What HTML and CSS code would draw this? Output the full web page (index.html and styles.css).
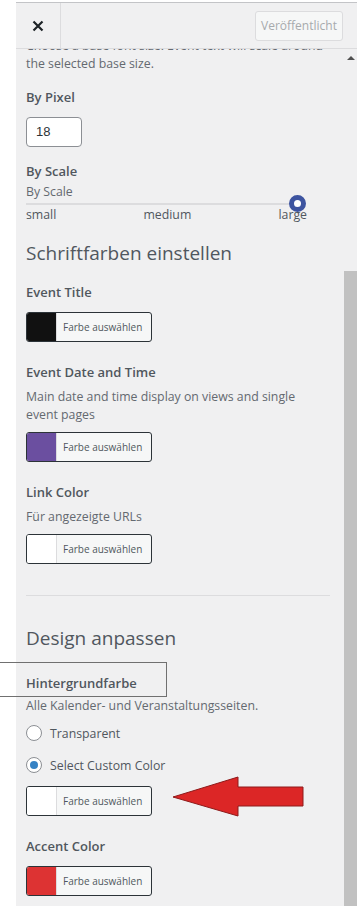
FILE: index.html
```html
<!DOCTYPE html>
<html lang="de">
<head>
<meta charset="utf-8">
<title>Customizer</title>
<link rel="stylesheet" href="styles.css">
</head>
<body>
<div class="frame">
  <div class="sidebar">
    <header class="topbar">
      <button class="close" aria-label="Schließen">
        <svg width="12" height="12" viewBox="0 0 12 12"><path d="M1.5 1.5 L10.5 10.5 M10.5 1.5 L1.5 10.5" stroke="#1d2327" stroke-width="2.2" stroke-linecap="butt"/></svg>
      </button>
      <div class="topbar-rest">
        <button class="publish" disabled>Veröffentlicht</button>
      </div>
    </header>
    <div class="body">
      <div class="content">
        <p class="desc cut"><span class="nowrap">Choose a base font size. Event text will scale around</span><br>the selected base size.</p>

        <div class="label mt-pixel">By Pixel</div>
        <div class="num-input">18</div>

        <div class="label mt-scale">By Scale</div>
        <div class="sub">By Scale</div>
        <div class="slider"><span class="track"></span><span class="thumb"></span></div>
        <div class="slider-labels"><span>small</span><span>medium</span><span>large</span></div>

        <h3 class="section-title mt-h1">Schriftfarben einstellen</h3>

        <div class="label mt-first">Event Title</div>
        <div class="color-btn"><span class="swatch sw-black"></span><span class="cb-text">Farbe auswählen</span></div>

        <div class="label mt-next">Event Date and Time</div>
        <p class="desc">Main date and time display on views and single event pages</p>
        <div class="color-btn"><span class="swatch sw-purple"></span><span class="cb-text">Farbe auswählen</span></div>

        <div class="label mt-next">Link Color</div>
        <p class="desc">Für angezeigte URLs</p>
        <div class="color-btn"><span class="swatch sw-white"></span><span class="cb-text">Farbe auswählen</span></div>

        <hr class="divider">

        <h3 class="section-title mt-h2">Design anpassen</h3>

        <div class="label mt-bg">Hintergrundfarbe</div>
        <p class="desc tight">Alle Kalender- und Veranstaltungsseiten.</p>
        <div class="radio-row first"><span class="radio"></span><span>Transparent</span></div>
        <div class="radio-row"><span class="radio checked"></span><span>Select Custom Color</span></div>
        <div class="color-btn mt-cb"><span class="swatch sw-white"></span><span class="cb-text">Farbe auswählen</span></div>

        <div class="label mt-next">Accent Color</div>
        <div class="color-btn"><span class="swatch sw-red"></span><span class="cb-text">Farbe auswählen</span></div>
      </div>
      <div class="scrollbar">
        <span class="arrow-up"></span>
        <span class="sb-thumb"></span>
      </div>
    </div>
  </div>
</div>
<div class="highlight"></div>
<svg class="annot-arrow" width="134" height="42" viewBox="0 0 134 42">
  <polygon points="1,21 66,1 66,11 131,11 131,30 66,30 66,40" fill="#dc2626" stroke="#8e1a1a" stroke-width="1"/>
</svg>
</body>
</html>
```
FILE: styles.css
```css
* { box-sizing: border-box; }
html, body { margin: 0; padding: 0; background: #ffffff; }
body {
  font-family: "Open Sans", "Noto Sans", "Liberation Sans", sans-serif;
  font-size: 12.3px;
  color: #50575e;
  width: 360px;
  height: 911px;
  overflow: hidden;
  position: relative;
}
.frame {
  padding: 2px 3px 0 16px;
  height: 906px;
}
.sidebar {
  height: 904px;
  display: flex;
  flex-direction: column;
  background: #f0f0f1;
  border-top: 1px solid #c3c4c7;
}
.topbar {
  height: 46px;
  display: flex;
  border-bottom: 1px solid #dcdcde;
  background: #f0f0f1;
  position: relative;
  z-index: 2;
}
.close {
  width: 45px;
  border: 0;
  border-right: 1px solid #dcdcde;
  background: transparent;
  display: flex;
  align-items: center;
  justify-content: center;
  padding: 0;
}
.topbar-rest {
  flex: 1;
  display: flex;
  justify-content: flex-end;
  align-items: center;
  padding-right: 14px;
}
.publish {
  height: 30px;
  width: 88px;
  border: 1px solid #dcdcde;
  border-radius: 3px;
  background: #f6f7f7;
  color: #a7aaad;
  font-family: inherit;
  font-size: 12px;
  padding: 0;
}
.body {
  flex: 1;
  display: flex;
  min-height: 0;
}
.content {
  flex: 1;
  overflow: hidden;
  padding: 0 14px 0 10px;
}
.scrollbar {
  width: 13px;
  position: relative;
  display: flex;
  flex-direction: column;
  align-items: center;
}
.arrow-up {
  margin-top: 7px;
  width: 0; height: 0;
  border-left: 4px solid transparent;
  border-right: 4px solid transparent;
  border-bottom: 4px solid #505050;
}
.sb-thumb {
  position: absolute;
  left: 0;
  top: 222px;
  bottom: 0;
  width: 13px;
  background: #c1c1c1;
}
.desc {
  margin: 0;
  line-height: 18px;
  color: #646970;
  font-size: 12.3px;
}
.nowrap { white-space: nowrap; }
.cut { margin-top: -12px; }
.label {
  font-weight: 600;
  font-size: 13px;
  line-height: 20px;
  color: #50575e;
}
.mt-pixel { margin-top: 14px; }
.num-input {
  margin-top: 10px;
  width: 56px;
  height: 30px;
  border: 1px solid #8c8f94;
  border-radius: 4px;
  background: #fff;
  color: #2c3338;
  font-family: "Liberation Sans", Arial, sans-serif;
  font-size: 13px;
  line-height: 28px;
  padding-left: 9px;
}
.mt-scale { margin-top: 14px; }
.sub { line-height: 18px; color: #646970; margin-top: 2px; }
.slider {
  position: relative;
  height: 4px;
  width: 272px;
  margin-top: 1px;
}
.track {
  position: absolute;
  left: 0; right: 0; top: 1px;
  height: 2px;
  background: #dcdcde;
}
.thumb {
  position: absolute;
  right: -8px;
  top: -7px;
  width: 17px;
  height: 17px;
  border-radius: 50%;
  background: #fff;
  border: 5px solid #3d54a0;
}
.slider-labels {
  width: 281px;
  display: flex;
  justify-content: space-between;
  line-height: 18px;
  color: #50575e;
  margin-top: 0;
}
.section-title {
  margin: 0;
  font-weight: 400;
  font-size: 19px;
  line-height: 28px;
  color: #50575e;
}
.mt-h1 { margin-top: 15px; }
.mt-first { margin-top: 15px; }
.color-btn {
  margin-top: 10px;
  width: 126px;
  height: 30px;
  border: 1px solid #2c3338;
  border-radius: 3px;
  display: flex;
  overflow: hidden;
  background: #f6f7f7;
}
.swatch {
  width: 30px;
  border-right: 1px solid #dcdcde;
}
.sw-black { background: #111111; }
.sw-purple { background: #6b4fa0; }
.sw-white { background: #ffffff; }
.sw-red { background: #dd3333; }
.cb-text {
  flex: 1;
  font-size: 10px;
  line-height: 28px;
  padding-left: 6px;
  color: #50575e;
}
.mt-next { margin-top: 20px; }
.mt-next + .desc { margin-top: 6px; }
.mt-next + .desc + .color-btn { margin-top: 8px; }
.divider {
  border: 0;
  border-top: 1px solid #dcdcde;
  margin: 31px 0 0 0;
  width: 304px;
}
.mt-h2 { margin-top: 28px; }
.mt-bg { margin-top: 21px; }
.tight { margin-top: 4px; }
.radio-row {
  display: flex;
  align-items: center;
  gap: 8px;
  height: 20px;
  margin-top: 12px;
  color: #50575e;
}
.radio-row.first { margin-top: 8px; }
.radio {
  width: 16px;
  height: 16px;
  border-radius: 50%;
  border: 1px solid #8c8f94;
  background: #fff;
  display: flex;
  align-items: center;
  justify-content: center;
}
.radio.checked::after {
  content: "";
  width: 8px;
  height: 8px;
  border-radius: 50%;
  background: #3582c4;
}
.mt-cb { margin-top: 11px; }
.highlight {
  position: absolute;
  left: 0;
  top: 662px;
  width: 167px;
  height: 35px;
  border: 1px solid #707070;
  border-left: 0;
}
.annot-arrow {
  position: absolute;
  left: 172px;
  top: 776px;
}
```
